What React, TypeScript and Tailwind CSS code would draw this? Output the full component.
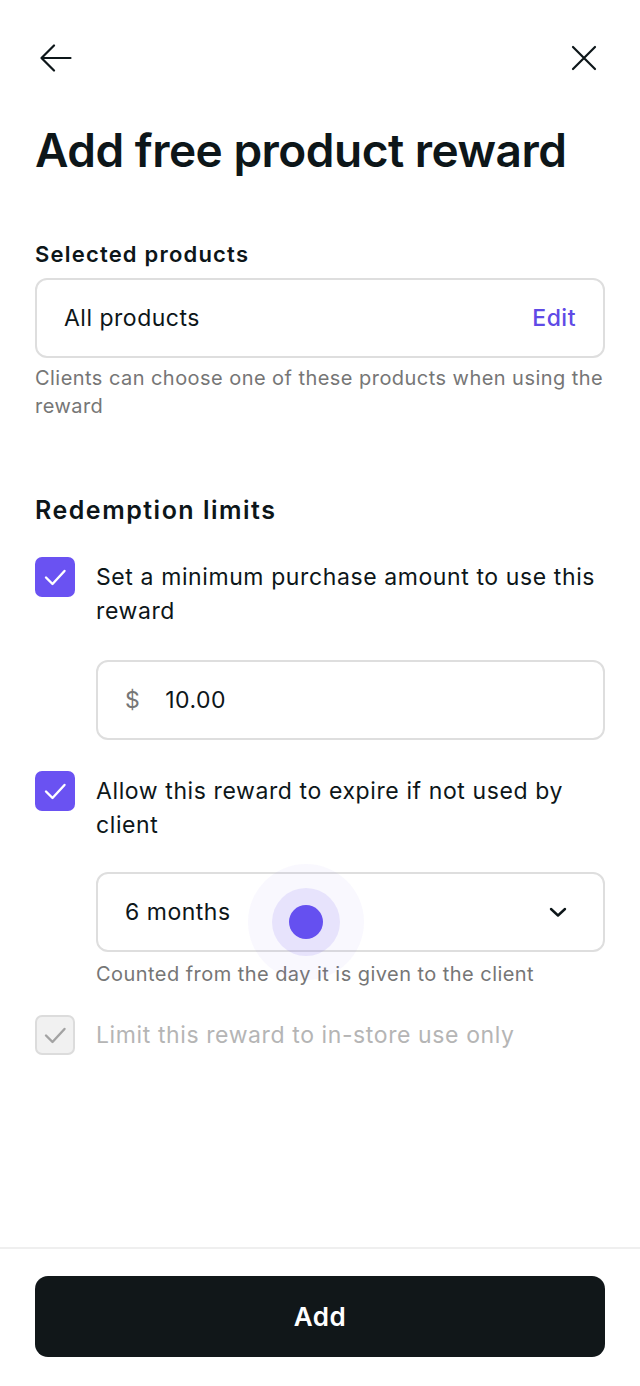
import { useState } from "react";

function CheckIcon({ color = "#ffffff" }: { color?: string }) {
  return (
    <svg width="40" height="40" viewBox="0 0 40 40" fill="none">
      <polyline points="11,20.5 17.5,27 29.5,14" stroke={color} strokeWidth="2.4" strokeLinecap="round" strokeLinejoin="round" />
    </svg>
  );
}

function Checkbox({ checked, disabled }: { checked: boolean; disabled?: boolean }) {
  if (disabled) {
    return (
      <div className="w-10 h-10 shrink-0 rounded-[7px] border-2 border-[#dcdcdc] bg-[#f1f1f1] flex items-center justify-center">
        <div className="-m-[2px]"><CheckIcon color="#a3a3a3" /></div>
      </div>
    );
  }
  return (
    <div className={`w-10 h-10 shrink-0 rounded-[7px] flex items-center justify-center ${checked ? "bg-[#6a52f2]" : "border-2 border-[#cfcfcf] bg-white"}`}>
      {checked && <CheckIcon />}
    </div>
  );
}

function CheckRow({ label, checked, disabled }: { label: string; checked: boolean; disabled?: boolean }) {
  return (
    <div className="flex items-start gap-[21px]">
      <Checkbox checked={checked} disabled={disabled} />
      <div className={`pt-[3px] text-[23px] leading-[34px] tracking-[0.6px] ${disabled ? "text-[#b5b5b5]" : "text-[#0d1619]"}`}>{label}</div>
    </div>
  );
}

export default function App() {
  const [minAmount] = useState("10.00");

  return (
    <div className="w-[640px] h-[1386px] flex flex-col bg-white font-['Inter',sans-serif] text-[#0d1619]">
      <div className="flex-1 px-[35px]">
        {/* top bar */}
        <div className="h-12 mt-[34px] flex items-center justify-between">
          <svg width="33" height="28" viewBox="0 0 33 28" fill="none" className="ml-[4px]">
            <path d="M2.5 14H31.5M15 1.5L2.5 14L15 26.5" stroke="#0d1619" strokeWidth="2.2" strokeLinecap="round" strokeLinejoin="round" />
          </svg>
          <svg width="26" height="26" viewBox="0 0 26 26" fill="none" className="mr-[8px]">
            <path d="M2 2L24 24M24 2L2 24" stroke="#0d1619" strokeWidth="2.2" strokeLinecap="round" />
          </svg>
        </div>

        <h1 className="mt-[40px] text-[46px] leading-[56px] font-semibold tracking-[-0.5px]">Add free product reward</h1>

        {/* selected products */}
        <div className="mt-[62px] text-[22px] leading-[28px] font-semibold tracking-[1.2px]">Selected products</div>
        <div className="mt-[10px] h-20 rounded-[12px] border-2 border-[#dedede] px-[27px] flex items-center justify-between text-[23px] tracking-[0.5px]">
          <span>All products</span>
          <span className="font-medium text-[#5f4ae6]">Edit</span>
        </div>
        <p className="mt-[6px] text-[20px] leading-[28px] tracking-[0.45px] text-[#767676]">
          Clients can choose one of these products when using the reward
        </p>

        {/* redemption limits */}
        <div className="mt-[74px] text-[25px] leading-[32px] font-semibold tracking-[1.5px]">Redemption limits</div>

        <div className="mt-[31px]">
          <CheckRow checked label="Set a minimum purchase amount to use this reward" />
        </div>
        <div className="ml-[61px] mt-[32px] h-20 rounded-[12px] border-2 border-[#dedede] px-[27px] flex items-center gap-[25px] text-[23px] tracking-[0.5px]">
          <span className="text-[#767676]">$</span>
          <span>{minAmount}</span>
        </div>

        <div className="mt-[31px]">
          <CheckRow checked label="Allow this reward to expire if not used by client" />
        </div>
        <div className="ml-[61px] mt-[30px] relative">
          <div className="h-20 rounded-[12px] border-2 border-[#dedede] pl-[27px] pr-[36px] flex items-center justify-between text-[23px] tracking-[0.5px]">
            <span>6 months</span>
            <svg width="18" height="12" viewBox="0 0 18 12" fill="none">
              <path d="M2 3L9 9.5L16 3" stroke="#0d1619" strokeWidth="2.4" strokeLinecap="round" strokeLinejoin="round" />
            </svg>
          </div>
          {/* touch indicator */}
          <div className="absolute left-[152px] top-[-8px] w-[116px] h-[116px] rounded-full bg-[#6a52f2]/[0.04] flex items-center justify-center pointer-events-none">
            <div className="w-[68px] h-[68px] rounded-full bg-[#6a52f2]/[0.12] flex items-center justify-center">
              <div className="w-[34px] h-[34px] rounded-full bg-[#6550f0]" />
            </div>
          </div>
          <p className="mt-[8px] text-[20px] leading-[28px] tracking-[0.45px] text-[#767676]">Counted from the day it is given to the client</p>
        </div>

        <div className="mt-[27px]">
          <CheckRow checked disabled label="Limit this reward to in-store use only" />
        </div>
      </div>

      {/* footer */}
      <div className="shrink-0 h-[139px] border-t-2 border-[#efefef] px-[35px] pt-[27px]">
        <button className="w-full h-[81px] rounded-[13px] bg-[#111719] text-white text-[26px] font-semibold tracking-[0.5px]">Add</button>
      </div>
    </div>
  );
}
